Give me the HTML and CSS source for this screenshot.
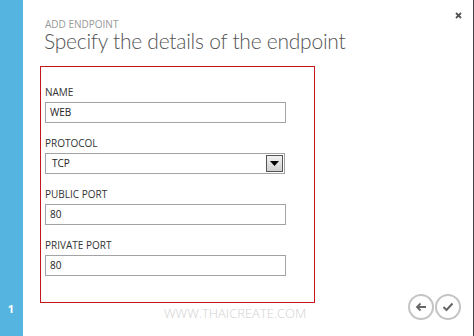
FILE: index.html
```html
<!DOCTYPE html>
<html>
<head>
<meta charset="utf-8">
<link rel="stylesheet" href="styles.css">
</head>
<body>
<div class="dialog">
  <aside class="rail"><span class="step">1</span></aside>
  <main class="main">
    <div class="kicker">ADD ENDPOINT</div>
    <h1 class="title">Specify the details of the endpoint</h1>
    <section class="box">
      <div class="field">
        <label class="label">NAME</label>
        <div class="input">WEB</div>
      </div>
      <div class="field">
        <label class="label">PROTOCOL</label>
        <div class="input select">
          <span class="select-text">TCP</span>
          <span class="drop"><svg width="9" height="5" viewBox="0 0 9 5"><path d="M0 0H9L4.5 5Z" fill="#000"/></svg></span>
        </div>
      </div>
      <div class="field">
        <label class="label">PUBLIC PORT</label>
        <div class="input">80</div>
      </div>
      <div class="field">
        <label class="label">PRIVATE PORT</label>
        <div class="input">80</div>
      </div>
    </section>
    <div class="watermark">WWW.THAICREATE.COM</div>
    <button class="close" aria-label="close"><svg width="7" height="7" viewBox="0 0 7 7"><path d="M1 1L6 6M6 1L1 6" stroke="#555" stroke-width="1.8"/></svg></button>
    <div class="actions">
      <span class="circle"><svg width="12" height="10" viewBox="0 0 12 10"><path d="M11 5H2M5.5 1.5L2 5L5.5 8.5" fill="none" stroke="#666" stroke-width="1.8"/></svg></span>
      <span class="circle"><svg width="12" height="10" viewBox="0 0 12 10"><path d="M1.5 5L4.5 8L10.5 1.5" fill="none" stroke="#666" stroke-width="2"/></svg></span>
    </div>
  </main>
</div>
</body>
</html>
```
FILE: styles.css
```css
html, body {
  margin: 0;
  padding: 0;
  background: #fff;
  overflow: hidden;
}
.dialog {
  display: flex;
  width: 474px;
  height: 336px;
  box-sizing: border-box;
  border-right: 1px solid #444;
  font-family: "Open Sans", "Liberation Sans", sans-serif;
}
.rail {
  width: 23px;
  flex: none;
  background: #56b5e0;
  display: flex;
  flex-direction: column;
  justify-content: flex-end;
  align-items: center;
  padding-bottom: 21px;
  box-sizing: border-box;
}
.step {
  color: #fff;
  font-weight: 700;
  font-size: 11px;
  line-height: 12px;
  margin-left: -1px;
}
.main {
  flex: 1;
  position: relative;
  padding: 19px 0 0 17px;
}
.kicker {
  font-size: 10px;
  line-height: 10px;
  color: #999;
  padding-left: 5px;
}
.title {
  margin: 0;
  font-family: "Lato", "Open Sans", sans-serif;
  font-weight: 300;
  font-size: 21px;
  line-height: 24px;
  letter-spacing: -0.25px;
  color: #555;
  padding-left: 4px;
}
.box {
  margin-top: 13px;
  width: 275px;
  height: 237px;
  box-sizing: border-box;
  border: 1px solid #c4161c;
  padding: 19px 0 0 4px;
  display: flex;
  flex-direction: column;
  gap: 14px;
}
.field {
  display: flex;
  flex-direction: column;
  gap: 4px;
}
.label {
  font-size: 10px;
  line-height: 12px;
  color: #333;
}
.input {
  width: 241px;
  height: 21px;
  box-sizing: border-box;
  border: 1px solid #a3a3a3;
  font-size: 10px;
  line-height: 19px;
  padding-left: 4px;
  color: #222;
}
.select {
  width: 240px;
  display: flex;
  align-items: center;
  justify-content: space-between;
  padding-left: 6px;
  padding-right: 1px;
}
.drop {
  width: 17px;
  height: 17px;
  box-sizing: border-box;
  border: 1px solid #555;
  background: linear-gradient(#f2f2f2, #cfcfcf);
  display: flex;
  align-items: center;
  justify-content: center;
}
.watermark {
  margin-top: 2px;
  margin-left: 124px;
  font-size: 13px;
  font-weight: 300;
  line-height: 16px;
  color: #d2d2d2;
}
.close {
  position: absolute;
  top: 12px;
  right: 11px;
  padding: 0;
  border: 0;
  background: none;
  width: 7px;
  height: 7px;
  display: flex;
}
.actions {
  position: absolute;
  right: 12px;
  top: 294px;
  display: flex;
  gap: 1px;
}
.circle {
  width: 26px;
  height: 26px;
  box-sizing: border-box;
  border: 2px solid #c4c4c4;
  border-radius: 50%;
  display: flex;
  align-items: center;
  justify-content: center;
}
```
